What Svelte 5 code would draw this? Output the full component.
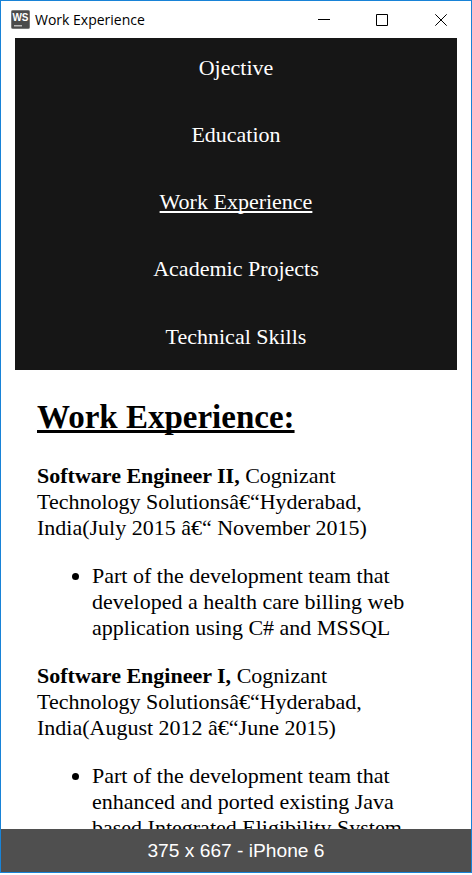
<script>
  const links = ['Ojective', 'Education', 'Work Experience', 'Academic Projects', 'Technical Skills'];
  const current = 'Work Experience';
  const jobs = [
    {
      title: 'Software Engineer II,',
      lines: ['Cognizant', 'Technology Solutionsâ€“Hyderabad,', 'India(July 2015 â€“ November 2015)'],
      duty: ['Part of the development team that', 'developed a health care billing web', 'application using C# and MSSQL']
    },
    {
      title: 'Software Engineer I,',
      lines: ['Cognizant', 'Technology Solutionsâ€“Hyderabad,', 'India(August 2012 â€“June 2015)'],
      duty: ['Part of the development team that', 'enhanced and ported existing Java', 'based Integrated Eligibility System']
    }
  ];
</script>

<div class="window">
  <header>
    <svg class="logo" width="19" height="19" viewBox="0 0 19 19">
      <rect x="0.5" y="0.5" width="18" height="18" rx="1" fill="#4b4b4b" stroke="#777" />
      <text x="9.5" y="11" text-anchor="middle" textLength="16" lengthAdjust="spacingAndGlyphs">WS</text>
      <rect x="3" y="15" width="8" height="1.5" fill="#bbb" />
    </svg>
    <span class="title">Work Experience</span>
    <div class="controls">
      <svg width="12" height="12" viewBox="0 0 12 12"><path d="M0 5.5H12" /></svg>
      <svg width="12" height="12" viewBox="0 0 12 12"><path d="M.5 .5H11.5V11.5H.5Z" /></svg>
      <svg width="12" height="12" viewBox="0 0 12 12"><path d="M.3 .3L11.7 11.7M11.7 .3L.3 11.7" /></svg>
    </div>
  </header>
  <nav>
    {#each links as link}
      <span class="link" class:current={link === current}>{link}</span>
    {/each}
  </nav>
  <main>
    <h1>Work Experience:</h1>
    {#each jobs as job}
      <p><b>{job.title}</b> {job.lines[0]}<br />{job.lines[1]}<br />{job.lines[2]}</p>
      <ul>
        <li>{job.duty[0]}<br />{job.duty[1]}<br />{job.duty[2]}</li>
      </ul>
    {/each}
  </main>
  <footer>375 x 667 - iPhone 6</footer>
</div>

<style>
  :global(body) {
    margin: 0;
    background: #fff;
  }
  .window {
    box-sizing: border-box;
    width: 472px;
    height: 873px;
    border: 1px solid #1883d7;
    display: flex;
    flex-direction: column;
    overflow: hidden;
    background: #fff;
    color: #000;
    font: 22px/26px 'Liberation Serif', serif;
  }
  header {
    flex: 0 0 37px;
    height: 37px;
    box-sizing: border-box;
    display: flex;
    align-items: center;
    padding: 0 24px 0 10px;
  }
  .logo text {
    font: bold 11px 'Liberation Sans', sans-serif;
    fill: #fff;
  }
  .title {
    margin-left: 5px;
    font: 14px/20px 'Open Sans', sans-serif;
    white-space: nowrap;
  }
  .controls {
    margin-left: auto;
    display: flex;
    gap: 47px;
  }
  .controls svg {
    display: block;
    fill: none;
    stroke: #000;
    stroke-width: 1;
  }
  .controls svg:first-child {
    margin-right: -1px;
  }
  nav {
    flex: 0 0 332px;
    box-sizing: border-box;
    margin: 0 14px;
    padding-top: 17px;
    background: #161616;
    color: #fff;
    display: flex;
    flex-direction: column;
    align-items: center;
    gap: 41.15px;
  }
  .link {
    white-space: nowrap;
  }
  .link:last-child {
    padding-top: 0.4px;
  }
  .current {
    text-decoration: underline;
    text-decoration-thickness: 2px;
    text-underline-offset: 2px;
    text-decoration-skip-ink: none;
  }
  main {
    flex: 1 1 0;
    min-height: 0;
    overflow: hidden;
    padding: 28px 36px 0;
    white-space: nowrap;
  }
  h1 {
    margin: 0 0 27px;
    font-size: 33px;
    line-height: 38px;
    text-decoration: underline;
    text-decoration-thickness: 3px;
    text-underline-offset: 2px;
    text-decoration-skip-ink: none;
  }
  p {
    margin: 0 0 22px;
  }
  ul {
    margin: 0 0 22px;
    padding-left: 55px;
  }
  footer {
    flex: 0 0 43px;
    background: #4f4f4f;
    color: #fff;
    text-align: center;
    font: 19.2px/43px 'Liberation Sans', sans-serif;
  }
</style>
